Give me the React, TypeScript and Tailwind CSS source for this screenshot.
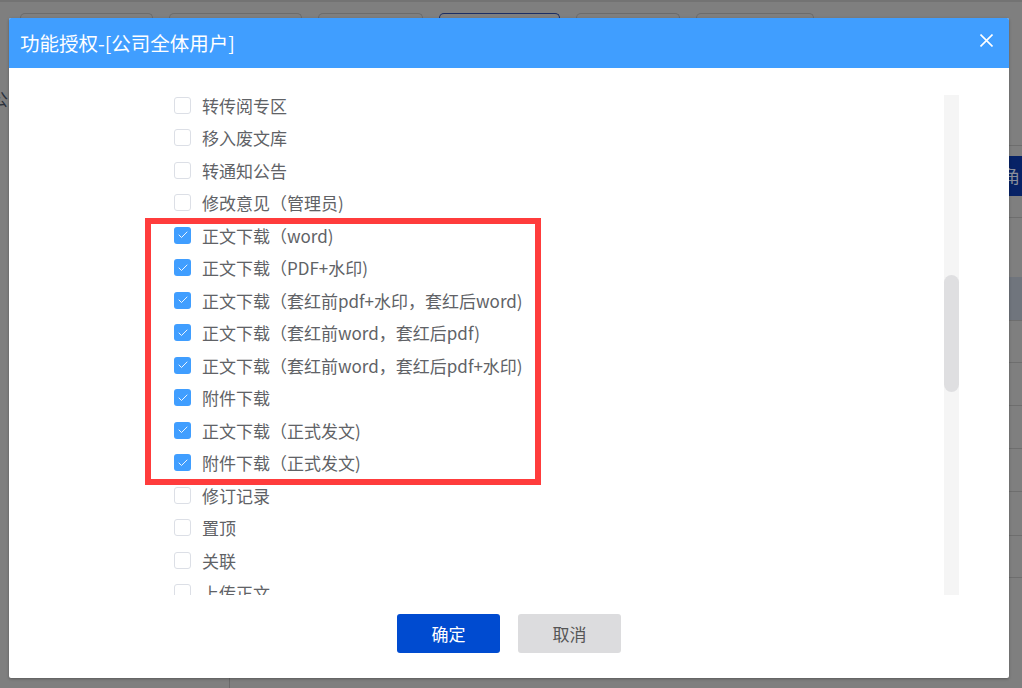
import { Check } from "lucide-react";

const items: { label: string; checked: boolean }[] = [
  { label: "转传阅专区", checked: false },
  { label: "移入废文库", checked: false },
  { label: "转通知公告", checked: false },
  { label: "修改意见（管理员)", checked: false },
  { label: "正文下载（word)", checked: true },
  { label: "正文下载（PDF+水印)", checked: true },
  { label: "正文下载（套红前pdf+水印，套红后word)", checked: true },
  { label: "正文下载（套红前word，套红后pdf)", checked: true },
  { label: "正文下载（套红前word，套红后pdf+水印)", checked: true },
  { label: "附件下载", checked: true },
  { label: "正文下载（正式发文)", checked: true },
  { label: "附件下载（正式发文)", checked: true },
  { label: "修订记录", checked: false },
  { label: "置顶", checked: false },
  { label: "关联", checked: false },
  { label: "上传正文", checked: false },
  { label: "删除", checked: false },
];

const tabs = [
  { w: "w-[133px]", active: false },
  { w: "w-[133px]", active: false },
  { w: "w-[105px]", active: false },
  { w: "w-[121px]", active: true },
  { w: "w-[104px]", active: false },
  { w: "w-[118px]", active: false },
];

function Box({ checked }: { checked: boolean }) {
  return checked ? (
    <span className="w-[17px] h-[17px] rounded-[3px] bg-[#409eff] flex items-center justify-center shrink-0">
      <Check className="w-[12px] h-[12px] text-white" strokeWidth={1.8} />
    </span>
  ) : (
    <span className="w-[17px] h-[17px] rounded-[3px] bg-white border border-[#dcdfe6] shrink-0" />
  );
}

export default function App() {
  return (
    <div className="relative w-[1022px] h-[688px] overflow-hidden bg-[#7f7f7f] flex flex-col font-['Noto_Sans_CJK_SC',sans-serif]">
      {/* page behind the mask */}
      <div className="h-[18px] shrink-0 border-t-2 border-[#737373] flex items-end gap-[16px] pl-[20px]">
        {tabs.map((t, i) => (
          <div
            key={i}
            className={`${t.w} h-[5px] rounded-t-[5px] border border-b-0 ${
              t.active ? "border-[#1b2d63]" : "border-[#6c6c6c]"
            }`}
          />
        ))}
      </div>
      <div className="flex flex-1">
        <div className="w-[9px] overflow-hidden pt-[72px] text-[#2a2f3a] text-[17px] leading-none">
          <span className="-ml-[9px] block">公</span>
        </div>
        <div className="flex-1 flex flex-col justify-end">
          <div className="h-[11px] flex">
            <div className="w-[221px] border-r border-[#6a6a6a]" />
          </div>
        </div>
        <div className="w-[13px] flex flex-col">
          <div className="h-[128px] border-b border-[#6e6e6e] shrink-0" />
          <div className="h-[40px] mt-[10px] bg-[#072266] text-[#8a8f9c] text-[17px] leading-[40px] overflow-hidden shrink-0">
            <span className="-ml-[6px] block">角</span>
          </div>
          <div className="h-[22px] border-b border-[#6e6e6e] shrink-0" />
          <div className="h-[59px] shrink-0" />
          <div className="h-[44px] bg-[#70757d] border-b border-[#6e6e6e] shrink-0" />
          <div className="h-[42px] border-b border-[#6e6e6e] shrink-0" />
          <div className="h-[43px] border-b border-[#6e6e6e] shrink-0" />
          <div className="h-[43px] border-b border-[#6e6e6e] shrink-0" />
          <div className="h-[43px] border-b border-[#6e6e6e] shrink-0" />
          <div className="h-[44px] border-b border-[#6e6e6e] shrink-0" />
          <div className="h-[42px] border-b border-[#6e6e6e] shrink-0" />
        </div>
      </div>

      {/* dialog */}
      <div className="absolute left-[9px] top-[17.5px] w-[1000px] h-[660px] bg-white rounded-[2px] flex flex-col overflow-hidden shadow-[0_1px_3px_rgba(0,0,0,0.3)]">
        <div className="h-[50.5px] shrink-0 bg-[#409eff] flex items-center justify-between pl-[11px] pr-[16px]">
          <span className="text-white text-[19.5px] leading-none">功能授权-[公司全体用户]</span>
          <svg width="13" height="13" viewBox="0 0 13 13" className="-mt-[5px]">
            <path d="M0.5 0.5L12.5 12.5M12.5 0.5L0.5 12.5" stroke="#fff" strokeWidth="1.6" />
          </svg>
        </div>
        <div className="mt-[27px] h-[500px] flex shrink-0">
          <div className="flex-1 overflow-hidden">
            <div className="-mt-[6px] pl-[165px]">
              {items.map((it) => (
                <div key={it.label} className="h-[32.5px] flex items-center gap-[11px]">
                  <Box checked={it.checked} />
                  <span className="text-[17px] text-[#606266] leading-none whitespace-nowrap">{it.label}</span>
                </div>
              ))}
            </div>
          </div>
          <div className="w-[15px] bg-[#f5f5f5] mr-[50px] pt-[180px]">
            <div className="h-[117px] rounded-full bg-[#dfdfe1]" />
          </div>
        </div>
        <div className="flex justify-center gap-[18px] pt-[19px]">
          <button className="w-[103px] h-[39px] rounded-[3px] bg-[#004bd0] text-white text-[17px]">确定</button>
          <button className="w-[103px] h-[39px] rounded-[3px] bg-[#dcdcde] text-[#555] text-[17px]">取消</button>
        </div>
      </div>

      {/* annotation */}
      <div className="absolute left-[145px] top-[218px] w-[396px] h-[267px] border-[6px] border-[#ff3c3c]" />
    </div>
  );
}
